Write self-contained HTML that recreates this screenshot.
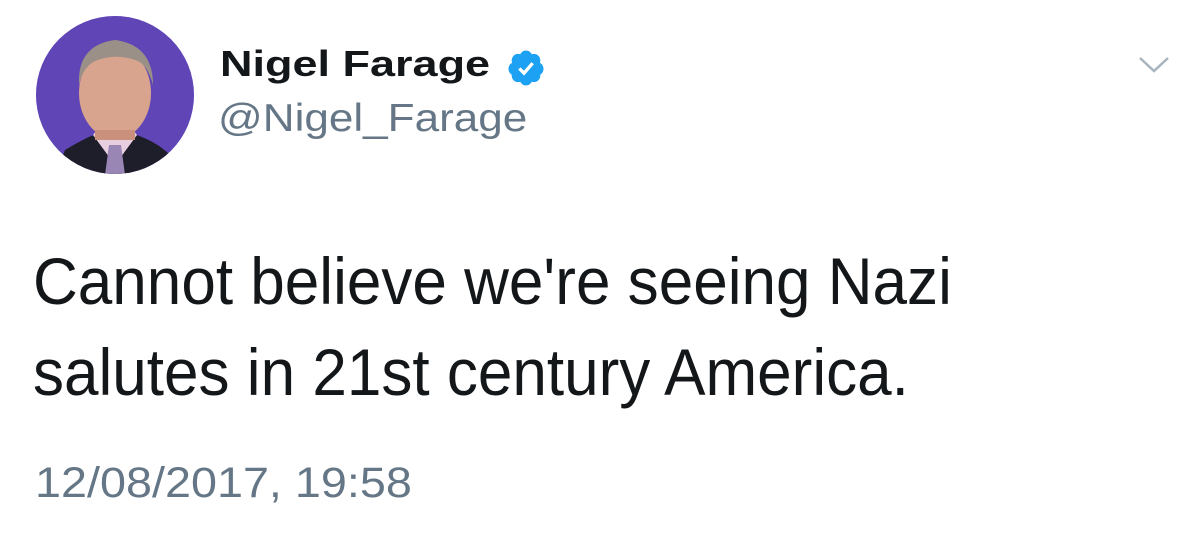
<!DOCTYPE html>
<html><head><style>
html,body{margin:0;padding:0;background:#fff;width:1200px;height:542px;overflow:hidden;font-family:"Liberation Sans",sans-serif;}
.a{position:absolute;white-space:nowrap;transform-origin:0 0;}
</style></head><body>
<svg class="a" style="left:35px;top:15px" width="160" height="160" viewBox="0 0 160 160">
<defs><clipPath id="c"><circle cx="80" cy="80" r="79"/></clipPath></defs>
<g clip-path="url(#c)">
<rect width="160" height="160" fill="#5a3fb0"/>
<rect x="0" y="0" width="160" height="160" fill="#6a50c0" opacity=".4"/>
<path d="M20 160 L30 135 Q55 120 65 118 L95 118 Q120 125 135 140 L145 160Z" fill="#1e1d2a"/>
<path d="M58 120 L80 150 L102 120 L96 112 L64 112Z" fill="#e8cfe0"/>
<path d="M74 130 L86 130 L90 160 L70 160Z" fill="#9a86b4"/>
<ellipse cx="80" cy="78" rx="36" ry="46" fill="#d9a48e"/>
<path d="M44 70 Q42 30 80 25 Q118 30 118 70 Q112 48 100 45 Q80 38 60 46 Q48 52 44 70Z" fill="#9a9088"/>
<rect x="60" y="115" width="40" height="10" fill="#c9907c"/>
</g></svg>
<div class="a" style="left:220px;top:43px;font-size:36px;font-weight:bold;color:#14171a;transform:scaleX(1.25);">Nigel Farage</div>
<svg class="a" style="left:506px;top:48px" width="40" height="40" viewBox="0 0 24 24"><path fill="#1da1f2" d="M22.5 12.5c0-1.58-.875-2.95-2.148-3.6.154-.435.238-.905.238-1.4 0-2.21-1.71-3.998-3.818-3.998-.47 0-.92.084-1.336.25C14.818 2.415 13.51 1.5 12 1.5s-2.816.917-3.437 2.25c-.415-.165-.866-.25-1.336-.25-2.11 0-3.818 1.790-3.818 4 0 .494.083.964.237 1.4-1.272.65-2.147 2.018-2.147 3.6 0 1.495.782 2.798 1.942 3.486-.02.17-.032.34-.032.514 0 2.21 1.708 4 3.818 4 .47 0 .92-.086 1.335-.25.62 1.334 1.926 2.25 3.437 2.25 1.512 0 2.818-.916 3.437-2.25.415.163.865.248 1.336.248 2.11 0 3.818-1.79 3.818-4 0-.174-.012-.344-.033-.513 1.158-.687 1.943-1.99 1.943-3.484z"/><path fill="none" stroke="#fff" stroke-width="2" d="M8 12.3l2.8 2.8 5.2-6"/></svg>
<div class="a" style="left:218px;top:97px;font-size:39px;color:#657786;transform:scaleX(1.13);">@Nigel_Farage</div>
<svg class="a" style="left:1138px;top:56px" width="32" height="18" viewBox="0 0 32 18"><path d="M2 2 L16 15 L30 2" fill="none" stroke="#a8b4be" stroke-width="2.5"/></svg>
<div class="a" style="left:33px;top:243px;font-size:66px;color:#14171a;transform:scaleX(0.94);">Cannot believe we're seeing Nazi</div>
<div class="a" style="left:33px;top:334px;font-size:66px;color:#14171a;transform:scaleX(0.94);">salutes in 21st century America.</div>
<div class="a" style="left:35px;top:459px;font-size:43px;color:#657786;transform:scaleX(1.087);">12/08/2017, 19:58</div>
</body></html>
